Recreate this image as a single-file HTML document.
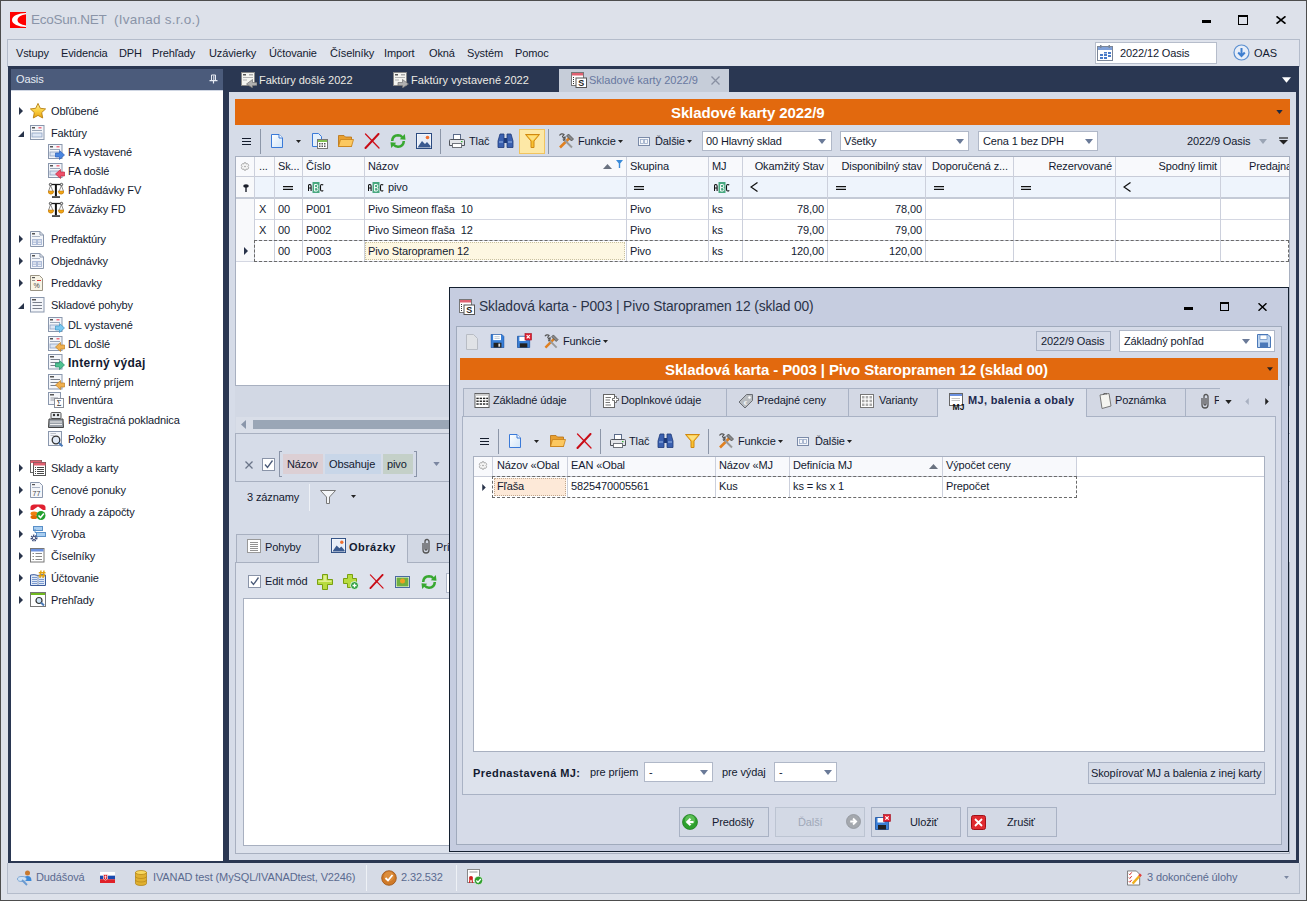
<!DOCTYPE html>
<html><head><meta charset="utf-8">
<style>
*{box-sizing:border-box;margin:0;padding:0}
html,body{width:1307px;height:901px;overflow:hidden}
body{position:relative;background:#dde1ea;font-family:"Liberation Sans",sans-serif;font-size:11px;color:#131a30}
.a{position:absolute}
.t{position:absolute;white-space:nowrap;line-height:13px;font-size:11px;letter-spacing:-0.12px}
.b{font-weight:bold}
</style></head><body>
<!-- window border -->
<div class="a" style="left:0;top:0;width:1307px;height:901px;border:1px solid #4d4d4d"></div>

<!-- title -->
<svg class="a" style="left:10px;top:12px" width="16" height="16" viewBox="0 0 16 16"><rect width="16" height="16" fill="#f00"/><path d="M16,1 A14,7 0 0 0 16,15 L16,13.6 A10.5,5.8 0 0 1 16,2.2 Z" fill="#fff"/></svg>
<div class="t" style="left:31px;top:12px;font-size:13.5px;line-height:16px;color:#8a94a8;letter-spacing:-0.25px">EcoSun.NET</div>
<div class="t" style="left:114px;top:12px;font-size:13.5px;line-height:16px;color:#8a94a8;letter-spacing:0.25px">(Ivanad s.r.o.)</div>
<div class="a" style="left:1202px;top:20px;width:9px;height:3px;background:#000"></div>
<div class="a" style="left:1238px;top:15px;width:10px;height:10px;border:1px solid #000;border-top-width:2px"></div>
<svg class="a" style="left:1276px;top:16px" width="10" height="8" viewBox="0 0 10 8"><path d="M0.5,0.3 L9.5,7.7 M9.5,0.3 L0.5,7.7" stroke="#000" stroke-width="1.6"/></svg>

<!-- menu bar -->
<div class="a" style="left:7px;top:39px;width:1293px;height:28px;background:#dfe3ec;border:1px solid #b4bccb;border-bottom:none"></div>
<div class="t" style="left:16px;top:47px">Vstupy</div>
<div class="t" style="left:61px;top:47px">Evidencia</div>
<div class="t" style="left:119px;top:47px">DPH</div>
<div class="t" style="left:152px;top:47px">Prehľady</div>
<div class="t" style="left:209px;top:47px">Uzávierky</div>
<div class="t" style="left:269px;top:47px">Účtovanie</div>
<div class="t" style="left:330px;top:47px">Číselníky</div>
<div class="t" style="left:384px;top:47px">Import</div>
<div class="t" style="left:429px;top:47px">Okná</div>
<div class="t" style="left:467px;top:47px">Systém</div>
<div class="t" style="left:515px;top:47px">Pomoc</div>
<div class="a" style="left:1095px;top:42px;width:122px;height:22px;background:#fff;border:1px solid #b6bdcb"></div>
<svg class="a" style="left:1097px;top:45px" width="16" height="16" viewBox="0 0 16 16"><rect x="0.5" y="1.5" width="15" height="14" fill="#fff" stroke="#7a8597"/><rect x="1" y="2" width="14" height="3" fill="#7fa0d8"/><rect x="3" y="0" width="1.5" height="3" fill="#7a8597"/><rect x="11.5" y="0" width="1.5" height="3" fill="#7a8597"/><g fill="#4a7cc8"><rect x="3" y="9" width="3" height="2"/><rect x="7" y="9" width="3" height="2"/><rect x="11" y="7" width="3" height="2"/><rect x="7" y="7" width="3" height="1.5"/><rect x="3" y="12" width="3" height="2"/><rect x="7" y="12" width="3" height="2"/><rect x="11" y="10" width="3" height="2"/></g></svg>
<div class="t" style="left:1120px;top:47px">2022/12 Oasis</div>
<svg class="a" style="left:1233px;top:44px" width="17" height="17" viewBox="0 0 17 17"><circle cx="8.5" cy="8.5" r="7.5" fill="#e8eef8" stroke="#5b8fd0" stroke-width="1.2"/><path d="M8.5,4 V11.5 M5.2,8.5 L8.5,12 L11.8,8.5" fill="none" stroke="#3f7fd0" stroke-width="2"/></svg>
<div class="t" style="left:1254px;top:47px">OAS</div>

<!-- navy -->
<div class="a" style="left:8px;top:66px;width:1291px;height:797px;background:#2a3752"></div>

<!-- left panel -->
<div class="a" style="left:11px;top:69px;width:212px;height:21px;background:#4b5b7b"></div>
<div class="t" style="left:16px;top:73px;color:#e6ecf5">Oasis</div>
<svg class="a" style="left:209px;top:74px" width="9" height="10" viewBox="0 0 9 10"><path d="M2.5,1 H6.5 V6.5 H2.5Z" fill="none" stroke="#e8ecf4" stroke-width="1"/><path d="M4.8,1.5 V6" stroke="#e8ecf4" stroke-width="1"/><path d="M0.5,6.7 H8.5 M4.5,7 V9.5" stroke="#e8ecf4" stroke-width="1.2"/></svg>
<div class="a" style="left:11px;top:90px;width:212px;height:771px;background:#fff;border-top:1px solid #cfd6e3"></div>

<svg width="0" height="0" style="position:absolute">
<defs>
<symbol id="tri-r" viewBox="0 0 4 8"><path d="M0,0 L4,4 L0,8Z" fill="#28334a"/></symbol>
<symbol id="tri-d" viewBox="0 0 6 6"><path d="M6,0 L6,6 L0,6Z" fill="#28334a"/></symbol>
<symbol id="star" viewBox="0 0 16 16"><defs><linearGradient id="stg" x1="0" y1="0" x2="0" y2="1"><stop offset="0" stop-color="#fff0a0"/><stop offset="0.5" stop-color="#fad040"/><stop offset="1" stop-color="#e8a010"/></linearGradient></defs><path d="M8,0.4 L10.3,5.3 L15.6,5.9 L11.7,9.6 L12.7,15 L8,12.4 L3.3,15 L4.3,9.6 L0.4,5.9 L5.7,5.3Z" fill="url(#stg)" stroke="#b88010" stroke-width="0.9" stroke-linejoin="round"/></symbol>
<symbol id="docf" viewBox="0 0 16 16"><rect x="0.5" y="0.5" width="13.5" height="14" fill="#f4f6fa" stroke="#8a97ad"/><rect x="2" y="2" width="3" height="1.5" fill="#555"/><rect x="8.5" y="2" width="3" height="1.5" fill="#f07080"/><rect x="2" y="5" width="10" height="1" fill="#9aa6b8"/><rect x="2" y="8" width="10" height="4" fill="#dde6f4" stroke="#8fa2c2" stroke-width="0.8"/></symbol>
<symbol id="arr-b" viewBox="0 0 10 10"><path d="M0.5,3 H4.5 V0.5 L9.5,5 L4.5,9.5 V7 H0.5Z" fill="#4a86e0" stroke="#2c5fb8" stroke-width="0.7"/></symbol>
<symbol id="arr-r" viewBox="0 0 10 10"><path d="M9.5,3 H5.5 V0.5 L0.5,5 L5.5,9.5 V7 H9.5Z" fill="#f0506a" stroke="#c02840" stroke-width="0.7"/></symbol>
<symbol id="arr-lb" viewBox="0 0 10 10"><path d="M0.5,3 H4.5 V0.5 L9.5,5 L4.5,9.5 V7 H0.5Z" fill="#7cc8f0" stroke="#3c98c8" stroke-width="0.7"/></symbol>
<symbol id="arr-o" viewBox="0 0 10 10"><path d="M9.5,3 H5.5 V0.5 L0.5,5 L5.5,9.5 V7 H9.5Z" fill="#f0b050" stroke="#c08020" stroke-width="0.7"/></symbol>
<symbol id="arr-g" viewBox="0 0 10 10"><path d="M0.5,3 H4.5 V0.5 L9.5,5 L4.5,9.5 V7 H0.5Z" fill="#50c090" stroke="#20906a" stroke-width="0.7"/></symbol>
<symbol id="scales" viewBox="0 0 16 16"><path d="M2.5,3.5 L0.6,9.2 M2.5,3.5 L4.9,9.2 M13.5,3.5 L11.1,9.2 M13.5,3.5 L15.4,9.2" stroke="#707070" stroke-width="0.8"/><path d="M1.5,2.5 H14.5" stroke="#1a1a1a" stroke-width="1.3"/><circle cx="2.5" cy="2.5" r="1.2" fill="#eee" stroke="#333" stroke-width="0.8"/><circle cx="13.5" cy="2.5" r="1.2" fill="#eee" stroke="#333" stroke-width="0.8"/><rect x="6.9" y="3" width="2" height="11.2" fill="#111"/><rect x="4" y="14.2" width="8" height="1.7" fill="#3a3a3a"/><path d="M0,9 H5.8 Q5.6,12.2 2.9,12.2 Q0.2,12.2 0,9Z" fill="#f2a614" stroke="#b06a08" stroke-width="0.5"/><path d="M10.2,9 H16 Q15.8,12.2 13.1,12.2 Q10.4,12.2 10.2,9Z" fill="#f2a614" stroke="#b06a08" stroke-width="0.5"/></symbol>
<symbol id="doct" viewBox="0 0 16 16"><path d="M0.5,0.5 H10 L13.5,4 V15.5 H0.5Z" fill="#f4f6fa" stroke="#8a97ad"/><path d="M10,0.5 V4 H13.5" fill="none" stroke="#8a97ad"/><rect x="2" y="2" width="3" height="1.5" fill="#555"/><rect x="2" y="5" width="8" height="0.8" fill="#9aa6b8"/><rect x="2" y="8" width="10" height="6" fill="#aebcd8"/><path d="M3,10 H6 M8,10 H11 M3,12.3 H6 M8,12.3 H11" stroke="#fff" stroke-width="1"/></symbol>
<symbol id="docp" viewBox="0 0 16 16"><path d="M0.5,0.5 H9.5 L12.5,3.5 V15.5 H0.5Z" fill="#f8f4e6" stroke="#9a9484"/><rect x="2" y="2" width="3" height="1.2" fill="#555"/><rect x="2" y="5" width="3" height="0.8" fill="#777"/><rect x="7" y="5" width="4" height="1" fill="#e03030"/><text x="6.5" y="13" font-size="7" text-anchor="middle" fill="#444" font-family="Liberation Sans">%</text></symbol>
<symbol id="docl" viewBox="0 0 16 16"><rect x="0.5" y="0.5" width="13.5" height="14.5" fill="#f4f6fa" stroke="#8a97ad"/><rect x="2" y="2" width="4" height="1.5" fill="#555"/><path d="M2.5,5.5 H12 M2.5,8.5 H12 M2.5,11.5 H12" stroke="#7a808c" stroke-width="1"/></symbol>
<symbol id="sigma" viewBox="0 0 16 16"><rect x="0.5" y="0.5" width="12" height="12" fill="#f4f6fa" stroke="#8a97ad"/><rect x="2" y="2" width="4" height="1.5" fill="#555"/><path d="M2.5,6 H10 M2.5,8 H6" stroke="#8a8f99" stroke-width="0.9"/><rect x="6.5" y="6.5" width="9" height="9" fill="#fff" stroke="#8a8f99"/><text x="11" y="14.3" font-size="8" text-anchor="middle" fill="#333" font-family="Liberation Serif">Σ</text></symbol>
<symbol id="cash" viewBox="0 0 16 16"><rect x="3" y="0.5" width="10" height="6" rx="1" fill="#e8ecf0" stroke="#555"/><circle cx="6" cy="3" r="1.2" fill="#333"/><circle cx="10" cy="3" r="1.2" fill="#333"/><path d="M1,7 H15 L15.5,15.5 H0.5Z" fill="#9aa0a8" stroke="#444"/><path d="M2,10 H14 M2,12.5 H14" stroke="#eee" stroke-width="1"/></symbol>
<symbol id="mag" viewBox="0 0 16 16"><rect x="0.5" y="0.5" width="13" height="14" fill="#f4f6fa" stroke="#8a97ad"/><path d="M2.5,2.5 H8 M2.5,4.5 H6" stroke="#b0b4bc" stroke-width="0.8"/><circle cx="8" cy="9" r="3.8" fill="#dfe8f5" stroke="#333" stroke-width="1.3"/><path d="M10.8,11.8 L14.5,15.2" stroke="#4a7ab8" stroke-width="2"/></symbol>
<symbol id="tbl" viewBox="0 0 16 16"><rect x="0.5" y="0.5" width="11" height="12" fill="#fff" stroke="#666"/><rect x="0.5" y="0.5" width="11" height="2.5" fill="#e06070"/><rect x="3.5" y="2.5" width="12" height="13" fill="#fff" stroke="#555"/><rect x="3.5" y="2.5" width="12" height="3" fill="#e06070"/><path d="M5,7.5 H6 M7,7.5 H14 M5,9.5 H6 M7,9.5 H14 M5,11.5 H6 M7,11.5 H14 M5,13.5 H6 M7,13.5 H14" stroke="#333" stroke-width="0.9"/></symbol>
<symbol id="d77" viewBox="0 0 16 16"><path d="M0.5,0.5 H9.5 L12.5,3.5 V15.5 H0.5Z" fill="#f4f6fa" stroke="#8a97ad"/><rect x="2" y="2" width="3" height="1.2" fill="#555"/><rect x="2" y="5" width="8" height="0.8" fill="#9aa6b8"/><text x="6.5" y="13.5" font-size="7" text-anchor="middle" fill="#444" font-family="Liberation Sans">77</text></symbol>
<symbol id="uhr" viewBox="0 0 16 16"><path d="M0.5,6 V3 Q1,0.5 4,0.5 H12 Q15,0.5 15.5,3 V6 H13 L8,2.5 L3,6Z" fill="#e02030"/><ellipse cx="4" cy="9.5" rx="3.5" ry="2" fill="#f08010"/><ellipse cx="4" cy="13" rx="3.5" ry="2" fill="#e06a00"/><circle cx="11" cy="11.5" r="4.5" fill="#22a030"/><path d="M8.5,11.5 L10.5,13.5 L13.8,9.5" fill="none" stroke="#fff" stroke-width="1.6"/></symbol>
<symbol id="vyr" viewBox="0 0 16 16"><rect x="3.5" y="0.5" width="9" height="4" fill="#a8cdf0" stroke="#5a90c8"/><rect x="6.5" y="6.5" width="9" height="4" fill="#a8cdf0" stroke="#5a90c8"/><path d="M5,3 V6.5 H6.5" fill="none" stroke="#5a90c8"/><circle cx="4" cy="12" r="2.6" fill="none" stroke="#3a4a78" stroke-width="1.8" stroke-dasharray="1.3 0.9"/><circle cx="4" cy="12" r="1.6" fill="none" stroke="#3a4a78" stroke-width="0.9"/></symbol>
<symbol id="cis" viewBox="0 0 16 16"><rect x="0.5" y="0.5" width="13.5" height="13.5" fill="#fff" stroke="#777"/><rect x="1" y="1" width="12.5" height="2.5" fill="#6a90e0"/><path d="M2.5,5.5 H4 M5.5,5.5 H12 M2.5,8.5 H4 M5.5,8.5 H12 M2.5,11.5 H4 M5.5,11.5 H12" stroke="#8a8a8a" stroke-width="1"/></symbol>
<symbol id="uct" viewBox="0 0 16 16"><path d="M0.5,5 Q4,4 8,5.5 Q12,4 15.5,5 V15.5 H0.5Z" fill="#dfe8f6" stroke="#3a5a9a"/><path d="M8,5.5 V15" stroke="#8899b8"/><path d="M2,7.5 H7 M2,9.5 H7 M2,11.5 H7 M2,13.5 H7 M9,9.5 H14 M9,11.5 H14 M9,13.5 H14" stroke="#7a9ad0" stroke-width="1"/><path d="M11,0.5 L10,8 M14,0.5 L13,8 M8.8,2.8 H15.5 M8.5,5.8 H15.2" stroke="#e0a010" stroke-width="1.4"/></symbol>
<symbol id="preh" viewBox="0 0 16 16"><rect x="0.5" y="0.5" width="15" height="14" fill="#fff" stroke="#777"/><rect x="1" y="1" width="14" height="2" fill="#70b820"/><circle cx="9" cy="8.5" r="3" fill="#cfe4f5" stroke="#333" stroke-width="1.2"/><path d="M11,10.5 L14,13.5" stroke="#4a7ab8" stroke-width="2"/></symbol>
<symbol id="tabdoc" viewBox="0 0 16 16"><rect x="0.5" y="0.5" width="13" height="13" fill="#f4f4f0" stroke="#888"/><rect x="2" y="2" width="3" height="1.5" fill="#555"/><rect x="8" y="2" width="4" height="1.5" fill="#aaa"/><path d="M2,5.5 H12 M2,8 H6" stroke="#aaa" stroke-width="0.9"/><path d="M5,10.5 H9.5 V7.5 L15.5,12 L9.5,16 V13.5 H5Z" fill="#b0b0b0" stroke="#707070" stroke-width="0.7"/></symbol>
<symbol id="tabdoc2" viewBox="0 0 16 16"><rect x="0.5" y="0.5" width="13" height="13" fill="#f4f4f0" stroke="#888"/><rect x="2" y="2" width="3" height="1.5" fill="#555"/><rect x="8" y="2" width="4" height="1.5" fill="#aaa"/><path d="M2,5.5 H12 M2,8 H6" stroke="#aaa" stroke-width="0.9"/><path d="M16,10.5 H11.5 V7.5 L5.5,12 L11.5,16 V13.5 H16Z" fill="#b0b0b0" stroke="#707070" stroke-width="0.7"/></symbol>
<symbol id="sklk" viewBox="0 0 16 16"><rect x="0.5" y="0.5" width="12" height="13" fill="#fff" stroke="#777"/><rect x="1" y="1" width="11" height="2.5" fill="#e06070"/><path d="M2,5.5 H3 M2,7.5 H3 M2,9.5 H3 M2,11.5 H3" stroke="#333"/><rect x="5" y="6" width="10.5" height="9.5" fill="#fff" stroke="#555"/><text x="10.3" y="14" font-size="9" font-weight="bold" text-anchor="middle" fill="#222" font-family="Liberation Sans">S</text></symbol>
<symbol id="ham" viewBox="0 0 9 8"><rect x="0" y="1" width="9" height="1" fill="#141c2c"/><rect x="0" y="4" width="9" height="1" fill="#141c2c"/><rect x="0" y="7" width="9" height="1" fill="#141c2c"/></symbol>
<symbol id="newdoc" viewBox="0 0 16 16"><defs><linearGradient id="ndg" x1="0" y1="0" x2="1" y2="1"><stop offset="0" stop-color="#ffffff"/><stop offset="1" stop-color="#cfe4f8"/></linearGradient></defs><path d="M2.5,1.5 H10 L13.5,5 V14.5 H2.5Z" fill="url(#ndg)" stroke="#3a7ad8"/><path d="M10,1.5 V5 H13.5" fill="#fff" stroke="#3a7ad8"/></symbol>
<symbol id="newdis" viewBox="0 0 16 16"><path d="M2.5,0.5 H9.5 L13.5,4.5 V15.5 H2.5Z" fill="#e0e2e6" stroke="#b8bcc4"/></symbol>
<symbol id="dd" viewBox="0 0 5 3"><path d="M0,0 H5 L2.5,3Z" fill="#222"/></symbol>
<symbol id="caldoc" viewBox="0 0 16 16"><path d="M0.5,0.5 H6.5 L9.5,3.5 V13.5 H0.5Z" fill="#e4f0fc" stroke="#3a7ad8"/><rect x="5.5" y="6.5" width="10" height="9" fill="#fff" stroke="#777"/><rect x="6" y="7" width="9" height="2" fill="#80c050"/><g fill="#555"><rect x="7" y="10" width="1.5" height="1.5"/><rect x="9.5" y="10" width="1.5" height="1.5"/><rect x="12" y="10" width="1.5" height="1.5"/><rect x="7" y="12.5" width="1.5" height="1.5"/><rect x="9.5" y="12.5" width="1.5" height="1.5"/><rect x="12" y="12.5" width="1.5" height="1.5"/></g></symbol>
<symbol id="folder" viewBox="0 0 16 16"><path d="M0.5,2.5 H6 L7.5,4 H13.5 V13.5 H0.5Z" fill="#e8a030" stroke="#b87010" stroke-width="0.8"/><path d="M2.5,6.5 H15.5 L13.5,13.5 H0.5Z" fill="#fcc860" stroke="#c88018" stroke-width="0.8"/></symbol>
<symbol id="redx" viewBox="0 0 16 16"><path d="M1.5,1 L15,15" stroke="#d0101a" stroke-width="1.3" stroke-linecap="round"/><path d="M14.5,1 L1.5,15" stroke="#c80c16" stroke-width="2" stroke-linecap="round"/></symbol>
<symbol id="refresh" viewBox="0 0 16 16"><path d="M2.2,8 Q2.5,2.5 8,2.3 Q10.8,2.3 12.3,4.2" fill="none" stroke="#38a830" stroke-width="2.6"/><path d="M9.8,6.2 L15.5,6.8 L14.8,1Z" fill="#38a830"/><path d="M13.8,8 Q13.5,13.5 8,13.7 Q5.2,13.7 3.7,11.8" fill="none" stroke="#38a830" stroke-width="2.6"/><path d="M6.2,9.8 L0.5,9.2 L1.2,15Z" fill="#38a830"/></symbol>
<symbol id="pic" viewBox="0 0 16 16"><rect x="0.5" y="0.5" width="15" height="15" fill="#fff" stroke="#2a4a80"/><rect x="1.5" y="1.5" width="13" height="13" fill="#e8eef8"/><path d="M1.5,14.5 L6,8 L9,11 L11,9 L14.5,13 V14.5Z" fill="#3a5a90"/><circle cx="11.5" cy="4.5" r="1.8" fill="#f07030"/></symbol>
<symbol id="printer" viewBox="0 0 16 16"><rect x="4.5" y="1.5" width="7" height="5" fill="#fff" stroke="#5a6a88"/><path d="M1.5,6.5 H14.5 Q15.5,6.5 15.5,7.5 V12.5 H0.5 V7.5 Q0.5,6.5 1.5,6.5Z" fill="#e4e6ea" stroke="#50545c"/><rect x="3.5" y="10.5" width="9" height="4" fill="#fff" stroke="#70747c"/><rect x="12" y="8" width="1.5" height="1.2" fill="#30b030"/></symbol>
<symbol id="binoc" viewBox="0 0 17 16"><path d="M1,8 L3,1 H7 V14.5 H1Z M16,8 L14,1 H10 V14.5 H16Z" fill="#3a60b0" stroke="#1e3a78" stroke-width="0.8"/><rect x="7" y="5" width="3" height="5" fill="#1e3a78"/><path d="M2,9 H6 M11,9 H15" stroke="#9ab8e8"/></symbol>
<symbol id="funnel" viewBox="0 0 15 14"><path d="M0.5,0.5 H14.5 L9,7 V13.5 H6 V7Z" fill="#f8c030" stroke="#d08810"/><path d="M2.5,1.5 H12.5 L8,6.5 H7Z" fill="#fce080"/></symbol>
<symbol id="tools" viewBox="0 0 17 16"><path d="M2,14.5 L12,4.5" stroke="#e08020" stroke-width="2.6"/><path d="M10.5,1 L15.5,6 L13.5,8 L8.5,3Z" fill="#888" stroke="#444" stroke-width="0.7"/><path d="M14,14.5 L5,5.5" stroke="#999" stroke-width="2"/><path d="M1.5,2.5 A3,3 0 0 1 6,1.5 L4.5,3.5 L5.5,5 L7,4 A3,3 0 0 1 5,7.5" fill="none" stroke="#555" stroke-width="1.2"/></symbol>
<symbol id="dalsie" viewBox="0 0 12 9"><rect x="0.5" y="0.5" width="11" height="8" fill="#f4f6fa" stroke="#7a8aa8"/><rect x="2.5" y="2.5" width="3" height="4" fill="none" stroke="#9aaac8" stroke-width="0.8"/><rect x="6.5" y="2.5" width="3" height="4" fill="none" stroke="#9aaac8" stroke-width="0.8"/></symbol>
<symbol id="ddg" viewBox="0 0 8 5"><path d="M0,0 H8 L4,5Z" fill="#6a7a98"/></symbol>
<symbol id="ddw" viewBox="0 0 8 5"><path d="M0,0 H8 L4,5Z" fill="#fff"/></symbol>
<symbol id="gear" viewBox="0 0 10 10"><path d="M5,0.6 Q6.3,0.6 6.4,2.2 Q8,1.4 8.7,2.7 Q9.6,4 8.3,5 Q9.6,6.2 8.6,7.5 Q7.6,8.6 6.3,7.8 Q6,9.5 5,9.5 Q4,9.5 3.7,7.8 Q2.4,8.6 1.4,7.5 Q0.4,6.2 1.7,5 Q0.4,4 1.3,2.7 Q2,1.4 3.6,2.2 Q3.7,0.6 5,0.6Z" fill="#f4f4f4" stroke="#8c8c8c" stroke-width="0.8"/><circle cx="5" cy="5" r="0.9" fill="#999"/></symbol>
<symbol id="pin" viewBox="0 0 6 8"><ellipse cx="3" cy="2" rx="2.8" ry="1.8" fill="#1a1e2a"/><rect x="2.3" y="3" width="1.4" height="5" fill="#1a1e2a"/></symbol>
<symbol id="abc" viewBox="0 0 16 11"><rect x="4.5" y="0" width="7" height="11" fill="#48a880"/><path d="M0.5,9 V4 Q0.5,2.5 1.8,2.5 Q3.1,2.5 3.1,4 V9 M0.5,6 H3.1" fill="none" stroke="#111" stroke-width="1.1"/><path d="M6.5,2.5 H8.8 Q9.8,2.5 9.8,3.9 Q9.8,5.6 8.6,5.6 H6.5 M8.6,5.6 Q10,5.6 10,7.3 Q10,9 8.8,9 H6.5 M6.6,2.5 V9" fill="none" stroke="#fff" stroke-width="1"/><path d="M15.2,3.2 Q14.6,2.5 13.8,2.5 Q12.5,2.5 12.5,4.3 V7.2 Q12.5,9 13.8,9 Q14.6,9 15.2,8.3" fill="none" stroke="#111" stroke-width="1.1"/></symbol>
<symbol id="eq" viewBox="0 0 10 4"><path d="M0,0.7 H10 M0,3.3 H10" stroke="#111" stroke-width="1.3"/></symbol>
<symbol id="lt" viewBox="0 0 8 10"><path d="M7.5,0.5 L1,5 L7.5,9.5" fill="none" stroke="#111" stroke-width="1.3"/></symbol>
<symbol id="sortup" viewBox="0 0 9 5"><path d="M0,5 L4.5,0 L9,5Z" fill="#6a7280"/></symbol>
<symbol id="filtsm" viewBox="0 0 7 8"><path d="M0,0 H7 L4.2,3.5 V8 H2.8 V3.5Z" fill="#3a8ad8"/></symbol>
<symbol id="plus" viewBox="0 0 16 16"><path d="M5.5,0.5 H10.5 V5.5 H15.5 V10.5 H10.5 V15.5 H5.5 V10.5 H0.5 V5.5 H5.5Z" fill="#b8dc40" stroke="#78a010"/><path d="M6.5,1.5 H9.5 V6.5 H14.5 V8 H1.5 V6.5 H6.5Z" fill="#e0f090"/></symbol>
<symbol id="plusc" viewBox="0 0 16 16"><path d="M4.5,0.5 H9.5 V4.5 H13.5 V9.5 H9.5 V13.5 H4.5 V9.5 H0.5 V4.5 H4.5Z" fill="#b8dc40" stroke="#78a010"/><circle cx="11.5" cy="11.5" r="4" fill="#30a040" stroke="#fff" stroke-width="0.8"/><path d="M9.5,11.5 H13.5 M11.5,9.5 V13.5" stroke="#fff" stroke-width="1.3"/></symbol>
<symbol id="pic2" viewBox="0 0 15 12"><rect x="0.5" y="0.5" width="14" height="11" fill="#fff" stroke="#4a6aa0"/><rect x="1.5" y="1.5" width="12" height="9" fill="#70b040"/><circle cx="7.5" cy="5" r="2.5" fill="#f0a020"/></symbol>
<symbol id="clip" viewBox="0 0 12 16"><path d="M3,5 V12 A3,3 0 0 0 9,12 V3.5 A2,2 0 0 0 5,3.5 V11 A1,1 0 0 0 7,11 V5" fill="none" stroke="#555" stroke-width="1.3"/></symbol>
<symbol id="chk" viewBox="0 0 13 13"><rect x="0.5" y="0.5" width="12" height="12" fill="#fff" stroke="#8a94a8"/><path d="M3,6.5 L5.5,9.5 L10.5,2.5" fill="none" stroke="#4a5a78" stroke-width="1.3"/></symbol>
<symbol id="funnelg" viewBox="0 0 16 14"><path d="M0.5,0.5 H15.5 L9.5,7 V13.5 H6.5 V7Z" fill="#f4f6f8" stroke="#777"/></symbol>
<symbol id="linesdoc" viewBox="0 0 14 14"><rect x="0.5" y="0.5" width="13" height="13" fill="#fff" stroke="#999"/><path d="M3,3.5 H11 M3,5.5 H11 M3,7.5 H11 M3,9.5 H11 M3,11.5 H11" stroke="#777" stroke-width="0.8"/></symbol>
<symbol id="userkey" viewBox="0 0 16 16"><circle cx="10.5" cy="3" r="2.5" fill="#c87a30"/><path d="M6.5,11 Q6.5,6 10.5,6 Q14.5,6 14.5,11Z" fill="#3a88d8"/><ellipse cx="5" cy="9" rx="4.5" ry="2.5" fill="#cfe2f5" stroke="#6a9ad0" stroke-width="0.8"/><path d="M5,10 L10,15" stroke="#6a9ad0" stroke-width="1.8"/></symbol>
<symbol id="flag" viewBox="0 0 15 11"><rect width="15" height="3.7" fill="#fff"/><rect y="3.7" width="15" height="3.6" fill="#1a4ab0"/><rect y="7.3" width="15" height="3.7" fill="#e02028"/><path d="M3.5,2.5 H7.5 V7 Q5.5,9.5 3.5,7Z" fill="#e02028" stroke="#fff" stroke-width="0.6"/><path d="M5.5,3.5 V7 M4.3,4.8 H6.7" stroke="#fff" stroke-width="0.7"/></symbol>
<symbol id="db" viewBox="0 0 12 16"><path d="M0.5,2.5 V13.5 A5.5,2 0 0 0 11.5,13.5 V2.5Z" fill="#e0b030" stroke="#b08010" stroke-width="0.7"/><ellipse cx="6" cy="2.5" rx="5.5" ry="2" fill="#f8d860" stroke="#b08010" stroke-width="0.7"/><path d="M0.5,6.5 A5.5,2 0 0 0 11.5,6.5 M0.5,10 A5.5,2 0 0 0 11.5,10" fill="none" stroke="#b08010" stroke-width="0.6"/></symbol>
<symbol id="okc" viewBox="0 0 16 16"><circle cx="8" cy="8" r="7.3" fill="#d07a28" stroke="#9a5010" stroke-width="0.8"/><circle cx="8" cy="6.5" r="5" fill="#e8a050" opacity="0.5"/><path d="M4.5,8 L7,10.5 L11.5,5" fill="none" stroke="#fff" stroke-width="1.8"/></symbol>
<symbol id="cert" viewBox="0 0 16 16"><rect x="0.5" y="0.5" width="12" height="13" fill="#fff" stroke="#888"/><rect x="2.5" y="2" width="8" height="2" fill="#ccc"/><circle cx="4" cy="9" r="2" fill="#d02020"/><path d="M3,10 L2.5,14 M5,10 L5.5,14" stroke="#d02020" stroke-width="1.2"/><circle cx="11.5" cy="11.5" r="4.2" fill="#30a030" stroke="#fff" stroke-width="0.6"/><path d="M9.3,11.5 L11,13.2 L13.8,10" fill="none" stroke="#fff" stroke-width="1.3"/></symbol>
<symbol id="tasks" viewBox="0 0 16 16"><path d="M0.5,0.5 H10 L13.5,4 V15.5 H0.5Z" fill="#fff" stroke="#777"/><path d="M2,3.5 L3,4.5 L5,2 M2,7.5 L3,8.5 L5,6 M2,11.5 L3,12.5 L5,10" fill="none" stroke="#d02020" stroke-width="1"/><path d="M6,14 L14,5" stroke="#f0b020" stroke-width="2.5"/><path d="M13,4 L15,6" stroke="#e04040" stroke-width="2.5"/></symbol>
<symbol id="floppy" viewBox="0 0 16 16"><path d="M0.5,0.5 H13 L15.5,3 V15.5 H0.5Z" fill="#3a80d8" stroke="#1a50a0" stroke-width="0.8"/><rect x="3" y="1" width="9" height="6" fill="#fff"/><path d="M4.5,3 H10.5 M4.5,5 H10.5" stroke="#9ab" stroke-width="0.7"/><rect x="3.5" y="10" width="9" height="5.5" fill="#222"/><rect x="9" y="11" width="2" height="3.5" fill="#ddd"/></symbol>
<symbol id="floppyx" viewBox="0 0 16 16"><path d="M0.5,3.5 H11 L13.5,6 V15.5 H0.5Z" fill="#3a80d8" stroke="#1a50a0" stroke-width="0.8"/><rect x="2.5" y="4" width="7" height="4.5" fill="#fff"/><rect x="3" y="11" width="8" height="4.5" fill="#222"/><rect x="8.5" y="0.5" width="7" height="7" fill="#e02030" stroke="#a01020" stroke-width="0.6"/><path d="M10.3,2.3 L13.7,5.7 M13.7,2.3 L10.3,5.7" stroke="#fff" stroke-width="1.2"/></symbol>
<symbol id="floppys" viewBox="0 0 14 14"><path d="M0.5,0.5 H11 L13.5,3 V13.5 H0.5Z" fill="#bcd4f0" stroke="#4a78b8"/><rect x="3" y="1" width="7" height="4.5" fill="#fff" stroke="#4a78b8" stroke-width="0.6"/><rect x="3" y="8.5" width="8" height="5" fill="#4a78b8"/></symbol>
<symbol id="grid9" viewBox="0 0 16 16"><rect x="0.5" y="0.5" width="15" height="15" fill="#fff" stroke="#555"/><rect x="1" y="1" width="14" height="2" fill="#ccc"/><g fill="#222"><rect x="2" y="5" width="2.5" height="1.5"/><rect x="5.5" y="5" width="2.5" height="1.5"/><rect x="9" y="5" width="2.5" height="1.5"/><rect x="12.5" y="5" width="2" height="1.5"/><rect x="2" y="8" width="2.5" height="1.5"/><rect x="5.5" y="8" width="2.5" height="1.5"/><rect x="9" y="8" width="2.5" height="1.5"/><rect x="12.5" y="8" width="2" height="1.5"/><rect x="2" y="11" width="2.5" height="1.5"/><rect x="5.5" y="11" width="2.5" height="1.5"/><rect x="9" y="11" width="2.5" height="1.5"/><rect x="12.5" y="11" width="2" height="1.5"/></g></symbol>
<symbol id="docplus" viewBox="0 0 16 16"><rect x="0.5" y="1.5" width="11" height="13" fill="#fff" stroke="#666"/><path d="M2.5,4.5 H8 M2.5,7 H7 M2.5,9.5 H7 M2.5,12 H8" stroke="#555" stroke-width="0.8"/><path d="M9.5,5.5 H11.5 V3.5 H13.5 V5.5 H15.5 V7.5 H13.5 V9.5 H11.5 V7.5 H9.5Z" fill="#fff" stroke="#555" stroke-width="0.8"/></symbol>
<symbol id="tag" viewBox="0 0 16 16"><path d="M1,9 L8.5,1.5 H14.5 V7.5 L7,15Z" fill="#b8bcc0" stroke="#6a6e74"/><circle cx="11.5" cy="4.5" r="1.2" fill="#fff"/><text x="7.5" y="11.5" font-size="6" text-anchor="middle" fill="#fff" font-family="Liberation Sans">€</text></symbol>
<symbol id="var" viewBox="0 0 14 14"><rect x="0.5" y="0.5" width="13" height="13" fill="#fff" stroke="#777"/><g fill="#aaa"><rect x="2" y="2" width="2.5" height="2.5"/><rect x="5.7" y="2" width="2.5" height="2.5"/><rect x="9.5" y="2" width="2.5" height="2.5"/><rect x="2" y="5.7" width="2.5" height="2.5"/><rect x="5.7" y="5.7" width="2.5" height="2.5"/><rect x="9.5" y="5.7" width="2.5" height="2.5"/><rect x="2" y="9.5" width="2.5" height="2.5"/><rect x="5.7" y="9.5" width="2.5" height="2.5"/><rect x="9.5" y="9.5" width="2.5" height="2.5"/></g></symbol>
<symbol id="mjic" viewBox="0 0 17 17"><rect x="0.5" y="0.5" width="13" height="12" fill="#fff" stroke="#666"/><rect x="1" y="1" width="12" height="2" fill="#6a90e0"/><path d="M2.5,5.5 H11 M2.5,7.5 H11" stroke="#aaa" stroke-width="0.7"/><text x="9.5" y="16.5" font-size="8.5" font-weight="bold" text-anchor="middle" fill="#111" font-family="Liberation Sans">MJ</text></symbol>
<symbol id="note" viewBox="0 0 14 16"><path d="M2,2 L11,0.5 L13,13 L4,15.5Z" fill="#f4f4f0" stroke="#777"/><path d="M5,1.5 L7,0 L9,1" fill="none" stroke="#555"/></symbol>
<symbol id="arrg" viewBox="0 0 16 16"><circle cx="8" cy="8" r="7.5" fill="#2ea02e" stroke="#1a7a1a" stroke-width="0.7"/><circle cx="8" cy="6" r="5" fill="#7ad070" opacity="0.6"/><path d="M11.5,8 H6 M8.5,4.8 L5.2,8 L8.5,11.2" fill="none" stroke="#fff" stroke-width="2"/></symbol>
<symbol id="arrgr" viewBox="0 0 16 16"><circle cx="8" cy="8" r="7.5" fill="#a4a8ae" stroke="#888c92" stroke-width="0.7"/><path d="M4.5,8 H10 M7.5,4.8 L10.8,8 L7.5,11.2" fill="none" stroke="#fff" stroke-width="2"/></symbol>
<symbol id="zrus" viewBox="0 0 15 15"><rect x="0.5" y="0.5" width="14" height="14" rx="2" fill="#e02a30" stroke="#a01018"/><path d="M4,4 L11,11 M11,4 L4,11" stroke="#fff" stroke-width="1.8"/></symbol>
</defs></svg>
<!-- tree -->
<svg class="a" style="left:19px;top:107px" width="4" height="8"><use href="#tri-r"/></svg>
<svg class="a" style="left:30px;top:103px" width="16" height="16"><use href="#star"/></svg>
<div class="t" style="left:51px;top:105px">Obľúbené</div>
<svg class="a" style="left:18px;top:131px" width="6" height="6"><use href="#tri-d"/></svg>
<svg class="a" style="left:30px;top:125px" width="16" height="16"><use href="#docf"/></svg>
<div class="t" style="left:51px;top:127px">Faktúry</div>
<svg class="a" style="left:48px;top:144px" width="16" height="16"><use href="#docf"/></svg>
<svg class="a" style="left:55px;top:150px" width="10" height="10"><use href="#arr-b"/></svg>
<div class="t" style="left:68px;top:146px">FA vystavené</div>
<svg class="a" style="left:48px;top:163px" width="16" height="16"><use href="#docf"/></svg>
<svg class="a" style="left:55px;top:169px" width="10" height="10"><use href="#arr-r"/></svg>
<div class="t" style="left:68px;top:165px">FA došlé</div>
<svg class="a" style="left:48px;top:182px" width="16" height="16"><use href="#scales"/></svg>
<div class="t" style="left:68px;top:184px">Pohľadávky FV</div>
<svg class="a" style="left:48px;top:201px" width="16" height="16"><use href="#scales"/></svg>
<div class="t" style="left:68px;top:203px">Záväzky FD</div>
<svg class="a" style="left:19px;top:235px" width="4" height="8"><use href="#tri-r"/></svg>
<svg class="a" style="left:30px;top:231px" width="16" height="16"><use href="#doct"/></svg>
<div class="t" style="left:51px;top:233px">Predfaktúry</div>
<svg class="a" style="left:19px;top:257px" width="4" height="8"><use href="#tri-r"/></svg>
<svg class="a" style="left:30px;top:253px" width="16" height="16"><use href="#doct"/></svg>
<div class="t" style="left:51px;top:255px">Objednávky</div>
<svg class="a" style="left:19px;top:279px" width="4" height="8"><use href="#tri-r"/></svg>
<svg class="a" style="left:30px;top:275px" width="16" height="16"><use href="#docp"/></svg>
<div class="t" style="left:51px;top:277px">Preddavky</div>
<svg class="a" style="left:18px;top:303px" width="6" height="6"><use href="#tri-d"/></svg>
<svg class="a" style="left:30px;top:297px" width="16" height="16"><use href="#docl"/></svg>
<div class="t" style="left:51px;top:299px">Skladové pohyby</div>
<svg class="a" style="left:48px;top:317px" width="16" height="16"><use href="#docf"/></svg>
<svg class="a" style="left:55px;top:323px" width="10" height="10"><use href="#arr-lb"/></svg>
<div class="t" style="left:68px;top:319px">DL vystavené</div>
<svg class="a" style="left:48px;top:336px" width="16" height="16"><use href="#docf"/></svg>
<svg class="a" style="left:55px;top:342px" width="10" height="10"><use href="#arr-o"/></svg>
<div class="t" style="left:68px;top:338px">DL došlé</div>
<svg class="a" style="left:48px;top:354px" width="16" height="16"><use href="#docl"/></svg>
<svg class="a" style="left:55px;top:360px" width="10" height="10"><use href="#arr-g"/></svg>
<div class="t b" style="left:68px;top:357px;font-size:12px;letter-spacing:0.28px">Interný výdaj</div>
<svg class="a" style="left:48px;top:374px" width="16" height="16"><use href="#docl"/></svg>
<svg class="a" style="left:55px;top:380px" width="10" height="10"><use href="#arr-o"/></svg>
<div class="t" style="left:68px;top:376px">Interný príjem</div>
<svg class="a" style="left:48px;top:392px" width="16" height="16"><use href="#sigma"/></svg>
<div class="t" style="left:68px;top:394px">Inventúra</div>
<svg class="a" style="left:48px;top:412px" width="16" height="16"><use href="#cash"/></svg>
<div class="t" style="left:68px;top:414px">Registračná pokladnica</div>
<svg class="a" style="left:48px;top:431px" width="16" height="16"><use href="#mag"/></svg>
<div class="t" style="left:68px;top:433px">Položky</div>
<svg class="a" style="left:19px;top:464px" width="4" height="8"><use href="#tri-r"/></svg>
<svg class="a" style="left:30px;top:460px" width="16" height="16"><use href="#tbl"/></svg>
<div class="t" style="left:51px;top:462px">Sklady a karty</div>
<svg class="a" style="left:19px;top:486px" width="4" height="8"><use href="#tri-r"/></svg>
<svg class="a" style="left:30px;top:482px" width="16" height="16"><use href="#d77"/></svg>
<div class="t" style="left:51px;top:484px">Cenové ponuky</div>
<svg class="a" style="left:19px;top:508px" width="4" height="8"><use href="#tri-r"/></svg>
<svg class="a" style="left:30px;top:504px" width="16" height="16"><use href="#uhr"/></svg>
<div class="t" style="left:51px;top:506px">Úhrady a zápočty</div>
<svg class="a" style="left:19px;top:530px" width="4" height="8"><use href="#tri-r"/></svg>
<svg class="a" style="left:30px;top:526px" width="16" height="16"><use href="#vyr"/></svg>
<div class="t" style="left:51px;top:528px">Výroba</div>
<svg class="a" style="left:19px;top:552px" width="4" height="8"><use href="#tri-r"/></svg>
<svg class="a" style="left:30px;top:548px" width="16" height="16"><use href="#cis"/></svg>
<div class="t" style="left:51px;top:550px">Číselníky</div>
<svg class="a" style="left:19px;top:574px" width="4" height="8"><use href="#tri-r"/></svg>
<svg class="a" style="left:30px;top:570px" width="16" height="16"><use href="#uct"/></svg>
<div class="t" style="left:51px;top:572px">Účtovanie</div>
<svg class="a" style="left:19px;top:596px" width="4" height="8"><use href="#tri-r"/></svg>
<svg class="a" style="left:30px;top:592px" width="16" height="16"><use href="#preh"/></svg>
<div class="t" style="left:51px;top:594px">Prehľady</div>

<!-- main tabs -->
<svg class="a" style="left:241px;top:72px" width="16" height="16"><use href="#tabdoc2"/></svg>
<div class="t" style="left:259px;top:74px;color:#eceae4;letter-spacing:0">Faktúry došlé 2022</div>
<svg class="a" style="left:393px;top:72px" width="16" height="16"><use href="#tabdoc"/></svg>
<div class="t" style="left:411px;top:74px;color:#eceae4;letter-spacing:0.05px">Faktúry vystavené 2022</div>
<div class="a" style="left:559px;top:69px;width:170px;height:23px;background:#c6cdd9"></div>
<svg class="a" style="left:571px;top:72px" width="16" height="16"><use href="#sklk"/></svg>
<div class="t" style="left:589px;top:74px;color:#6878a0;letter-spacing:0">Skladové karty 2022/9</div>
<svg class="a" style="left:711px;top:76px" width="9" height="9" viewBox="0 0 9 9"><path d="M0.5,0.5 L8.5,8.5 M8.5,0.5 L0.5,8.5" stroke="#8890a2" stroke-width="1.3"/></svg>
<svg class="a" style="left:1282px;top:77px" width="9" height="6"><use href="#ddw"/></svg>

<!-- content -->
<div class="a" style="left:229px;top:92px;width:1067px;height:768px;background:#d6dce8"></div>
<div class="a" style="left:235px;top:99px;width:1055px;height:26px;background:#e2690e"></div>
<div class="t b" style="left:671px;top:104px;font-size:15px;line-height:17px;color:#fff">Skladové karty 2022/9</div>
<svg class="a" style="left:1276px;top:110px" width="7" height="4" viewBox="0 0 8 5"><path d="M0,0 H8 L4,5Z" fill="#1e2a44"/></svg>

<!-- toolbar -->
<svg class="a" style="left:242px;top:137px" width="9" height="8"><use href="#ham"/></svg>
<div class="a" style="left:260px;top:129px;width:1px;height:25px;background:#8c96a8"></div>
<svg class="a" style="left:269px;top:133px" width="16" height="16"><use href="#newdoc"/></svg>
<svg class="a" style="left:296px;top:140px" width="5" height="3"><use href="#dd"/></svg>
<svg class="a" style="left:312px;top:133px" width="16" height="16"><use href="#caldoc"/></svg>
<svg class="a" style="left:338px;top:133px" width="16" height="16"><use href="#folder"/></svg>
<svg class="a" style="left:364px;top:133px" width="16" height="16"><use href="#redx"/></svg>
<svg class="a" style="left:390px;top:133px" width="16" height="16"><use href="#refresh"/></svg>
<svg class="a" style="left:416px;top:133px" width="16" height="16"><use href="#pic"/></svg>
<div class="a" style="left:440px;top:129px;width:1px;height:25px;background:#8c96a8"></div>
<svg class="a" style="left:449px;top:133px" width="16" height="16"><use href="#printer"/></svg>
<div class="t" style="left:469px;top:135px">Tlač</div>
<svg class="a" style="left:497px;top:133px" width="17" height="16"><use href="#binoc"/></svg>
<div class="a" style="left:519px;top:129px;width:26px;height:25px;background:#fde8a6;border:1px solid #f2c45e"></div>
<svg class="a" style="left:525px;top:134px" width="15" height="14"><use href="#funnel"/></svg>
<div class="a" style="left:548px;top:129px;width:1px;height:25px;background:#8c96a8"></div>
<svg class="a" style="left:558px;top:133px" width="17" height="16"><use href="#tools"/></svg>
<div class="t" style="left:578px;top:135px">Funkcie</div>
<svg class="a" style="left:618px;top:140px" width="5" height="3"><use href="#dd"/></svg>
<svg class="a" style="left:638px;top:137px" width="12" height="9"><use href="#dalsie"/></svg>
<div class="t" style="left:655px;top:135px">Ďalšie</div>
<svg class="a" style="left:687px;top:140px" width="5" height="3"><use href="#dd"/></svg>
<div class="a" style="left:702px;top:131px;width:130px;height:20px;background:#fff;border:1px solid #b0b8c8"></div>
<div class="t" style="left:706px;top:135px">00 Hlavný sklad</div>
<svg class="a" style="left:818px;top:139px" width="8" height="5"><use href="#ddg"/></svg>
<div class="a" style="left:840px;top:131px;width:129px;height:20px;background:#fff;border:1px solid #b0b8c8"></div>
<div class="t" style="left:844px;top:135px">Všetky</div>
<svg class="a" style="left:956px;top:139px" width="8" height="5"><use href="#ddg"/></svg>
<div class="a" style="left:978px;top:131px;width:120px;height:20px;background:#fff;border:1px solid #b0b8c8"></div>
<div class="t" style="left:983px;top:135px">Cena 1 bez DPH</div>
<svg class="a" style="left:1085px;top:139px" width="8" height="5"><use href="#ddg"/></svg>
<div class="t" style="left:1187px;top:135px">2022/9 Oasis</div>
<svg class="a" style="left:1259px;top:139px" width="8" height="5" viewBox="0 0 8 5"><path d="M0,0 H8 L4,5Z" fill="#9aa4b4"/></svg>
<svg class="a" style="left:1279px;top:137px" width="9" height="8" viewBox="0 0 9 8"><path d="M0,1 H9" stroke="#222" stroke-width="1.2"/><path d="M0,3 H9 L4.5,7.5Z" fill="#222"/></svg>


<!-- main grid -->
<div class="a" style="left:235px;top:156px;width:1055px;height:230px;background:#fff;border:1px solid #a8b0c0;border-bottom:none"></div>
<div class="a" style="left:236px;top:157px;width:1053px;height:19px;background:#f8f9fc"></div>
<div class="a" style="left:236px;top:177px;width:1053px;height:20px;background:#eef4fc"></div>
<div class="a" style="left:236px;top:177px;width:18px;height:20px;background:#f8f9fb"></div>
<div class="a" style="left:236px;top:176px;width:1053px;height:1px;background:#c8ccd8"></div>
<div class="a" style="left:236px;top:197px;width:1053px;height:2px;background:#c4cad6"></div>
<div class="a" style="left:236px;top:199px;width:18px;height:63px;background:#f8f9fb"></div>
<div class="a" style="left:254px;top:219px;width:1035px;height:1px;background:#d4d7e2"></div>
<div class="a" style="left:254px;top:240px;width:1035px;height:1px;background:#d4d7e2"></div>
<div class="a" style="left:236px;top:261px;width:1053px;height:1px;background:#d4d7e2"></div>
<div class="a" style="left:254px;top:157px;width:1px;height:105px;background:#ccd0dc"></div>
<div class="a" style="left:274px;top:157px;width:1px;height:105px;background:#ccd0dc"></div>
<div class="a" style="left:302px;top:157px;width:1px;height:105px;background:#ccd0dc"></div>
<div class="a" style="left:364px;top:157px;width:1px;height:105px;background:#ccd0dc"></div>
<div class="a" style="left:626px;top:157px;width:1px;height:105px;background:#ccd0dc"></div>
<div class="a" style="left:708px;top:157px;width:1px;height:105px;background:#ccd0dc"></div>
<div class="a" style="left:742px;top:157px;width:1px;height:105px;background:#ccd0dc"></div>
<div class="a" style="left:827px;top:157px;width:1px;height:105px;background:#ccd0dc"></div>
<div class="a" style="left:925px;top:157px;width:1px;height:105px;background:#ccd0dc"></div>
<div class="a" style="left:1013px;top:157px;width:1px;height:105px;background:#ccd0dc"></div>
<div class="a" style="left:1115px;top:157px;width:1px;height:105px;background:#ccd0dc"></div>
<div class="a" style="left:1220px;top:157px;width:1px;height:105px;background:#ccd0dc"></div>
<div class="t" style="left:259px;top:160px">...</div>
<div class="t" style="left:278px;top:160px">Sk...</div>
<div class="t" style="left:306px;top:160px">Číslo</div>
<div class="t" style="left:368px;top:160px">Názov</div>
<div class="t" style="left:630px;top:160px">Skupina</div>
<div class="t" style="left:712px;top:160px">MJ</div>
<div class="t" style="right:483px;top:160px;text-align:right">Okamžitý Stav</div>
<div class="t" style="right:385px;top:160px;text-align:right">Disponibilný stav</div>
<div class="t" style="left:932px;top:160px">Doporučená z...</div>
<div class="t" style="right:195px;top:160px;text-align:right">Rezervované</div>
<div class="t" style="right:90px;top:160px;text-align:right">Spodný limit</div>
<div class="a" style="left:1222px;top:157px;width:67px;height:19px;overflow:hidden"><div class="t" style="left:27px;top:3px">Predajna</div></div>
<svg class="a" style="left:240px;top:162px" width="10" height="9"><use href="#gear"/></svg>
<svg class="a" style="left:603px;top:164px" width="9" height="5"><use href="#sortup"/></svg>
<svg class="a" style="left:616px;top:160px" width="7" height="8"><use href="#filtsm"/></svg>
<svg class="a" style="left:243px;top:184px" width="6" height="8"><use href="#pin"/></svg>
<svg class="a" style="left:283px;top:186px" width="10" height="4"><use href="#eq"/></svg>
<svg class="a" style="left:634px;top:186px" width="10" height="4"><use href="#eq"/></svg>
<svg class="a" style="left:836px;top:186px" width="10" height="4"><use href="#eq"/></svg>
<svg class="a" style="left:934px;top:186px" width="10" height="4"><use href="#eq"/></svg>
<svg class="a" style="left:1021px;top:186px" width="10" height="4"><use href="#eq"/></svg>
<svg class="a" style="left:308px;top:182px" width="16" height="11"><use href="#abc"/></svg>
<svg class="a" style="left:368px;top:182px" width="16" height="11"><use href="#abc"/></svg>
<svg class="a" style="left:714px;top:182px" width="16" height="11"><use href="#abc"/></svg>
<div class="t" style="left:388px;top:181px">pivo</div>
<svg class="a" style="left:750px;top:182px" width="8" height="10"><use href="#lt"/></svg>
<svg class="a" style="left:1123px;top:182px" width="8" height="10"><use href="#lt"/></svg>
<div class="a" style="left:365px;top:242px;width:260px;height:18px;background:#fdf7e2;border:1px dotted #c8c0a0"></div>
<div class="a" style="left:254px;top:240px;width:1035px;height:22px;border:1px dashed #6a6a6a"></div>
<svg class="a" style="left:244px;top:247px" width="4" height="8"><use href="#tri-r"/></svg>
<div class="t" style="left:259px;top:203px">X</div>
<div class="t" style="left:278px;top:203px">00</div>
<div class="t" style="left:306px;top:203px">P001</div>
<div class="t" style="left:368px;top:203px">Pivo Simeon fľaša&nbsp; 10</div>
<div class="t" style="left:630px;top:203px">Pivo</div>
<div class="t" style="left:712px;top:203px">ks</div>
<div class="t" style="right:483px;top:203px">78,00</div>
<div class="t" style="right:385px;top:203px">78,00</div>
<div class="t" style="left:259px;top:224px">X</div>
<div class="t" style="left:278px;top:224px">00</div>
<div class="t" style="left:306px;top:224px">P002</div>
<div class="t" style="left:368px;top:224px">Pivo Simeon fľaša&nbsp; 12</div>
<div class="t" style="left:630px;top:224px">Pivo</div>
<div class="t" style="left:712px;top:224px">ks</div>
<div class="t" style="right:483px;top:224px">79,00</div>
<div class="t" style="right:385px;top:224px">79,00</div>
<div class="t" style="left:278px;top:245px">00</div>
<div class="t" style="left:306px;top:245px">P003</div>
<div class="t" style="left:368px;top:245px">Pivo Staropramen 12</div>
<div class="t" style="left:630px;top:245px">Pivo</div>
<div class="t" style="left:712px;top:245px">ks</div>
<div class="t" style="right:483px;top:245px">120,00</div>
<div class="t" style="right:385px;top:245px">120,00</div>

<!-- scroll + filter panel -->
<div class="a" style="left:235px;top:385px;width:1055px;height:1px;background:#a8b0c0"></div>
<div class="a" style="left:235px;top:386px;width:1055px;height:47px;background:#d2d8e4"></div>
<div class="a" style="left:236px;top:417px;width:1054px;height:16px;background:#d9dee8"></div>
<svg class="a" style="left:241px;top:420px" width="5" height="9" viewBox="0 0 5 9"><path d="M5,0 V9 L0,4.5Z" fill="#8a96aa"/></svg>
<div class="a" style="left:253px;top:420px;width:1030px;height:9px;background:#9aa6b6"></div>
<div class="a" style="left:235px;top:433px;width:1055px;height:1px;background:#a8b0c0"></div>
<div class="a" style="left:235px;top:434px;width:1px;height:47px;background:#a8b0c0"></div>
<div class="a" style="left:235px;top:481px;width:1055px;height:1px;background:#a8b0c0"></div>
<svg class="a" style="left:245px;top:461px" width="8" height="8" viewBox="0 0 8 8"><path d="M0.5,0.5 L7.5,7.5 M7.5,0.5 L0.5,7.5" stroke="#6a7488" stroke-width="1.3"/></svg>
<svg class="a" style="left:262px;top:458px" width="13" height="13"><use href="#chk"/></svg>
<div class="a" style="left:279px;top:451px;width:3px;height:26px;border:1px solid #8a94a8;border-right:none"></div>
<div class="a" style="left:283px;top:454px;width:40px;height:20px;background:#dccfd4"></div>
<div class="t" style="left:287px;top:458px">Názov</div>
<div class="a" style="left:325px;top:454px;width:56px;height:20px;background:#c8d6e8"></div>
<div class="t" style="left:329px;top:458px">Obsahuje</div>
<div class="a" style="left:383px;top:454px;width:30px;height:20px;background:#c4d0c8"></div>
<div class="t" style="left:387px;top:458px">pivo</div>
<div class="a" style="left:414px;top:451px;width:3px;height:26px;border:1px solid #8a94a8;border-left:none"></div>
<svg class="a" style="left:433px;top:462px" width="7" height="4" viewBox="0 0 8 5"><path d="M0,0 H8 L4,5Z" fill="#7a86a0"/></svg>
<div class="t" style="left:247px;top:491px">3 záznamy</div>
<div class="a" style="left:309px;top:484px;width:1px;height:27px;background:#eef1f6"></div>
<svg class="a" style="left:320px;top:490px" width="16" height="14"><use href="#funnelg"/></svg>
<svg class="a" style="left:351px;top:495px" width="5" height="3"><use href="#dd"/></svg>

<!-- bottom tabs -->
<div class="a" style="left:235px;top:562px;width:1055px;height:292px;background:#dde2ec;border:1px solid #a8b0c0"></div>
<div class="a" style="left:236px;top:534px;width:83px;height:29px;background:#d2d8e4;border:1px solid #a8b0c0"></div>
<div class="a" style="left:318px;top:534px;width:90px;height:29px;background:#dde2ec;border:1px solid #a8b0c0;border-bottom:none"></div>
<div class="a" style="left:407px;top:534px;width:60px;height:29px;background:#d2d8e4;border:1px solid #a8b0c0"></div>
<svg class="a" style="left:247px;top:539px" width="14" height="14"><use href="#linesdoc"/></svg>
<div class="t" style="left:265px;top:541px">Pohyby</div>
<svg class="a" style="left:331px;top:538px" width="15" height="15"><use href="#pic"/></svg>
<div class="t b" style="left:349px;top:541px;letter-spacing:0.5px">Obrázky</div>
<svg class="a" style="left:420px;top:538px" width="12" height="16"><use href="#clip"/></svg>
<div class="t" style="left:436px;top:541px">Prí</div>
<svg class="a" style="left:248px;top:575px" width="13" height="13"><use href="#chk"/></svg>
<div class="t" style="left:265px;top:575px">Edit mód</div>
<svg class="a" style="left:317px;top:574px" width="16" height="16"><use href="#plus"/></svg>
<svg class="a" style="left:343px;top:574px" width="16" height="16"><use href="#plusc"/></svg>
<svg class="a" style="left:369px;top:574px" width="15" height="15"><use href="#redx"/></svg>
<svg class="a" style="left:395px;top:576px" width="15" height="12"><use href="#pic2"/></svg>
<svg class="a" style="left:421px;top:574px" width="16" height="16"><use href="#refresh"/></svg>
<div class="a" style="left:446px;top:573px;width:20px;height:20px;background:#fff;border:1px solid #b0b8c8"></div>
<div class="a" style="left:243px;top:598px;width:1040px;height:248px;background:#fff;border:1px solid #a8b0c0"></div>

<!-- status bar -->
<div class="a" style="left:7px;top:863px;width:1293px;height:31px;background:#d6dbe6;border:1px solid #b4bccb;border-top:none"></div>
<svg class="a" style="left:17px;top:870px" width="16" height="16"><use href="#userkey"/></svg>
<div class="t" style="left:36px;top:871px;color:#5a6a90">Dudášová</div>
<svg class="a" style="left:100px;top:872px" width="15" height="11"><use href="#flag"/></svg>
<svg class="a" style="left:135px;top:870px" width="12" height="16"><use href="#db"/></svg>
<div class="t" style="left:153px;top:871px;color:#5a6a90">IVANAD test (MySQL/IVANADtest, V2246)</div>
<div class="a" style="left:366px;top:865px;width:1px;height:26px;background:#eef1f6"></div>
<svg class="a" style="left:381px;top:870px" width="16" height="16"><use href="#okc"/></svg>
<div class="t" style="left:401px;top:871px;color:#5a6a90">2.32.532</div>
<div class="a" style="left:456px;top:865px;width:1px;height:26px;background:#eef1f6"></div>
<svg class="a" style="left:467px;top:869px" width="16" height="16"><use href="#cert"/></svg>
<svg class="a" style="left:1127px;top:870px" width="15" height="16"><use href="#tasks"/></svg>
<div class="t" style="left:1147px;top:871px;color:#5a6a90">3 dokončené úlohy</div>
<svg class="a" style="left:1284px;top:876px" width="5" height="3" viewBox="0 0 8 5"><path d="M0,0 H8 L4,5Z" fill="#7a86a0"/></svg>

<!-- dialog -->
<div class="a" style="left:449px;top:287px;width:840px;height:565px;background:#c6cde0;border:1px solid #142030"></div>
<svg class="a" style="left:459px;top:299px" width="16" height="16"><use href="#sklk"/></svg>
<div class="t" style="left:479px;top:299px;font-size:13.8px;line-height:16px;color:#2a3348">Skladová karta - P003 | Pivo Staropramen 12 (sklad 00)</div>
<div class="a" style="left:1184px;top:307px;width:9px;height:3px;background:#000"></div>
<div class="a" style="left:1220px;top:302px;width:9px;height:9px;border:1px solid #000;border-top-width:2px"></div>
<svg class="a" style="left:1258px;top:303px" width="9" height="8" viewBox="0 0 9 8"><path d="M0.5,0.3 L8.5,7.7 M8.5,0.3 L0.5,7.7" stroke="#000" stroke-width="1.5"/></svg>
<div class="a" style="left:456px;top:326px;width:826px;height:519px;background:#d6dbe8;border:1px solid #a0aabc"></div>
<svg class="a" style="left:464px;top:334px" width="16" height="16"><use href="#newdis"/></svg>
<svg class="a" style="left:490px;top:334px" width="15" height="14" viewBox="0 0 16 16"><use href="#floppy"/></svg>
<svg class="a" style="left:517px;top:333px" width="15" height="15" viewBox="0 0 16 16"><use href="#floppyx"/></svg>
<svg class="a" style="left:543px;top:334px" width="17" height="15"><use href="#tools"/></svg>
<div class="t" style="left:563px;top:335px">Funkcie</div>
<svg class="a" style="left:603px;top:340px" width="5" height="3"><use href="#dd"/></svg>
<div class="a" style="left:1036px;top:331px;width:75px;height:20px;border:1px solid #a9b2c4"></div>
<div class="t" style="left:1041px;top:335px">2022/9 Oasis</div>
<div class="a" style="left:1119px;top:330px;width:156px;height:22px;background:#fff;border:1px solid #b0b8c8"></div>
<div class="t" style="left:1124px;top:335px">Základný pohľad</div>
<svg class="a" style="left:1242px;top:339px" width="8" height="5"><use href="#ddg"/></svg>
<svg class="a" style="left:1257px;top:334px" width="14" height="14"><use href="#floppys"/></svg>
<div class="a" style="left:460px;top:358px;width:818px;height:22px;background:#e2690e"></div>
<div class="t b" style="left:665px;top:361px;font-size:15px;line-height:17px;color:#fff">Skladová karta - P003 | Pivo Staropramen 12 (sklad 00)</div>
<svg class="a" style="left:1267px;top:367px" width="6" height="4" viewBox="0 0 8 5"><path d="M0,0 H8 L4,5Z" fill="#2a2020"/></svg>

<!-- dialog tabs -->
<div class="a" style="left:462px;top:416px;width:814px;height:379px;background:#dde2ec;border:1px solid #a9b2c4"></div>
<div class="a" style="left:463px;top:388px;width:128px;height:29px;background:#d3d8e4;border:1px solid #a9b2c4"></div>
<div class="a" style="left:590px;top:388px;width:137px;height:29px;background:#d3d8e4;border:1px solid #a9b2c4"></div>
<div class="a" style="left:726px;top:388px;width:123px;height:29px;background:#d3d8e4;border:1px solid #a9b2c4"></div>
<div class="a" style="left:848px;top:388px;width:90px;height:29px;background:#d3d8e4;border:1px solid #a9b2c4"></div>
<div class="a" style="left:937px;top:388px;width:150px;height:29px;background:#dde2ec;border:1px solid #a9b2c4;border-bottom:none"></div>
<div class="a" style="left:1086px;top:388px;width:100px;height:29px;background:#d3d8e4;border:1px solid #a9b2c4"></div>
<div class="a" style="left:1185px;top:388px;width:35px;height:29px;background:#d3d8e4;border:1px solid #a9b2c4;border-right:none"></div>
<svg class="a" style="left:474px;top:393px" width="16" height="15"><use href="#grid9"/></svg>
<div class="t" style="left:493px;top:394px">Základné údaje</div>
<svg class="a" style="left:603px;top:393px" width="16" height="16"><use href="#docplus"/></svg>
<div class="t" style="left:621px;top:394px">Doplnkové údaje</div>
<svg class="a" style="left:738px;top:393px" width="16" height="16"><use href="#tag"/></svg>
<div class="t" style="left:757px;top:394px">Predajné ceny</div>
<svg class="a" style="left:860px;top:394px" width="14" height="14"><use href="#var"/></svg>
<div class="t" style="left:879px;top:394px">Varianty</div>
<svg class="a" style="left:949px;top:393px" width="17" height="17"><use href="#mjic"/></svg>
<div class="t b" style="left:968px;top:394px;letter-spacing:0.33px;color:#1e2a50">MJ, balenia a obaly</div>
<svg class="a" style="left:1098px;top:393px" width="14" height="16"><use href="#note"/></svg>
<div class="t" style="left:1115px;top:394px">Poznámka</div>
<svg class="a" style="left:1199px;top:393px" width="12" height="16"><use href="#clip"/></svg>
<div class="a" style="left:1211px;top:390px;width:8px;height:25px;overflow:hidden"><div class="t" style="left:3px;top:4px">F</div></div>
<svg class="a" style="left:1225px;top:400px" width="7" height="4" viewBox="0 0 8 5"><path d="M0,0 H8 L4,5Z" fill="#222"/></svg>
<svg class="a" style="left:1245px;top:398px" width="4" height="7" viewBox="0 0 4 8"><path d="M4,0 V8 L0,4Z" fill="#a8b0c0"/></svg>
<svg class="a" style="left:1265px;top:398px" width="4" height="7" viewBox="0 0 4 8"><path d="M0,0 V8 L4,4Z" fill="#222"/></svg>

<!-- dialog tab toolbar -->
<svg class="a" style="left:480px;top:437px" width="9" height="8"><use href="#ham"/></svg>
<div class="a" style="left:498px;top:429px;width:1px;height:25px;background:#8c96a8"></div>
<svg class="a" style="left:507px;top:433px" width="16" height="16"><use href="#newdoc"/></svg>
<svg class="a" style="left:534px;top:440px" width="5" height="3"><use href="#dd"/></svg>
<svg class="a" style="left:550px;top:433px" width="16" height="16"><use href="#folder"/></svg>
<svg class="a" style="left:576px;top:433px" width="16" height="16"><use href="#redx"/></svg>
<div class="a" style="left:600px;top:429px;width:1px;height:25px;background:#8c96a8"></div>
<svg class="a" style="left:610px;top:433px" width="16" height="16"><use href="#printer"/></svg>
<div class="t" style="left:629px;top:435px">Tlač</div>
<svg class="a" style="left:657px;top:433px" width="17" height="16"><use href="#binoc"/></svg>
<svg class="a" style="left:685px;top:434px" width="15" height="14"><use href="#funnel"/></svg>
<div class="a" style="left:708px;top:429px;width:1px;height:25px;background:#8c96a8"></div>
<svg class="a" style="left:718px;top:433px" width="17" height="16"><use href="#tools"/></svg>
<div class="t" style="left:738px;top:435px">Funkcie</div>
<svg class="a" style="left:778px;top:440px" width="5" height="3"><use href="#dd"/></svg>
<svg class="a" style="left:797px;top:437px" width="12" height="9"><use href="#dalsie"/></svg>
<div class="t" style="left:815px;top:435px">Ďalšie</div>
<svg class="a" style="left:847px;top:440px" width="5" height="3"><use href="#dd"/></svg>

<!-- dialog grid -->
<div class="a" style="left:473px;top:456px;width:792px;height:296px;background:#fff;border:1px solid #a8b0c0"></div>
<div class="a" style="left:474px;top:457px;width:603px;height:19px;background:#f8f9fc"></div>
<div class="a" style="left:474px;top:476px;width:790px;height:1px;background:#c8ccd8"></div>
<div class="a" style="left:492px;top:457px;width:1px;height:20px;background:#ccd0dc"></div>
<div class="a" style="left:567px;top:457px;width:1px;height:40px;background:#ccd0dc"></div>
<div class="a" style="left:715px;top:457px;width:1px;height:40px;background:#ccd0dc"></div>
<div class="a" style="left:789px;top:457px;width:1px;height:40px;background:#ccd0dc"></div>
<div class="a" style="left:942px;top:457px;width:1px;height:40px;background:#ccd0dc"></div>
<div class="a" style="left:1076px;top:457px;width:1px;height:20px;background:#ccd0dc"></div>
<svg class="a" style="left:478px;top:461px" width="10" height="9"><use href="#gear"/></svg>
<div class="t" style="left:497px;top:459px">Názov «Obal</div>
<div class="t" style="left:571px;top:459px">EAN «Obal</div>
<div class="t" style="left:719px;top:459px">Názov «MJ</div>
<div class="t" style="left:793px;top:459px">Definícia MJ</div>
<svg class="a" style="left:929px;top:464px" width="9" height="5"><use href="#sortup"/></svg>
<div class="t" style="left:946px;top:459px">Výpočet ceny</div>
<div class="a" style="left:494px;top:478px;width:72px;height:18px;background:#fde9d8;border:1px dotted #c0a890"></div>
<div class="a" style="left:492px;top:476px;width:585px;height:22px;border:1px dashed #6a6a6a"></div>
<svg class="a" style="left:482px;top:484px" width="4" height="7"><use href="#tri-r"/></svg>
<div class="t" style="left:497px;top:480px">Fľaša</div>
<div class="t" style="left:571px;top:480px">5825470005561</div>
<div class="t" style="left:719px;top:480px">Kus</div>
<div class="t" style="left:793px;top:480px">ks = ks x 1</div>
<div class="t" style="left:946px;top:480px">Prepočet</div>

<!-- dialog bottom -->
<div class="t b" style="left:473px;top:767px;letter-spacing:0.42px">Prednastavená MJ:</div>
<div class="t" style="left:590px;top:766px">pre príjem</div>
<div class="a" style="left:644px;top:762px;width:69px;height:20px;background:#fff;border:1px solid #b0b8c8"></div>
<div class="t" style="left:649px;top:766px">-</div>
<svg class="a" style="left:700px;top:770px" width="8" height="5"><use href="#ddg"/></svg>
<div class="t" style="left:722px;top:766px">pre výdaj</div>
<div class="a" style="left:774px;top:762px;width:63px;height:20px;background:#fff;border:1px solid #b0b8c8"></div>
<div class="t" style="left:779px;top:766px">-</div>
<svg class="a" style="left:824px;top:770px" width="8" height="5"><use href="#ddg"/></svg>
<div class="a" style="left:1088px;top:762px;width:177px;height:22px;background:#d6dce8;border:1px solid #a9b2c4"></div>
<div class="t" style="left:1091px;top:767px">Skopírovať MJ a balenia z inej karty</div>

<div class="a" style="left:679px;top:807px;width:90px;height:30px;background:#d3d9e5;border:1px solid #a9b2c4"></div>
<svg class="a" style="left:682px;top:814px" width="16" height="16"><use href="#arrg"/></svg>
<div class="t" style="left:712px;top:816px">Predošlý</div>
<div class="a" style="left:775px;top:807px;width:90px;height:30px;background:#d3d9e5;border:1px solid #bcc4d2"></div>
<div class="t" style="left:798px;top:816px;color:#a0a8b8">Ďalší</div>
<svg class="a" style="left:846px;top:814px" width="15" height="15" viewBox="0 0 16 16"><use href="#arrgr"/></svg>
<div class="a" style="left:871px;top:807px;width:90px;height:30px;background:#d3d9e5;border:1px solid #a9b2c4"></div>
<svg class="a" style="left:875px;top:814px" width="16" height="16"><use href="#floppyx"/></svg>
<div class="t" style="left:910px;top:816px">Uložiť</div>
<div class="a" style="left:967px;top:807px;width:90px;height:30px;background:#d3d9e5;border:1px solid #a9b2c4"></div>
<svg class="a" style="left:971px;top:815px" width="15" height="15"><use href="#zrus"/></svg>
<div class="t" style="left:1007px;top:816px">Zrušiť</div>

</body></html>
